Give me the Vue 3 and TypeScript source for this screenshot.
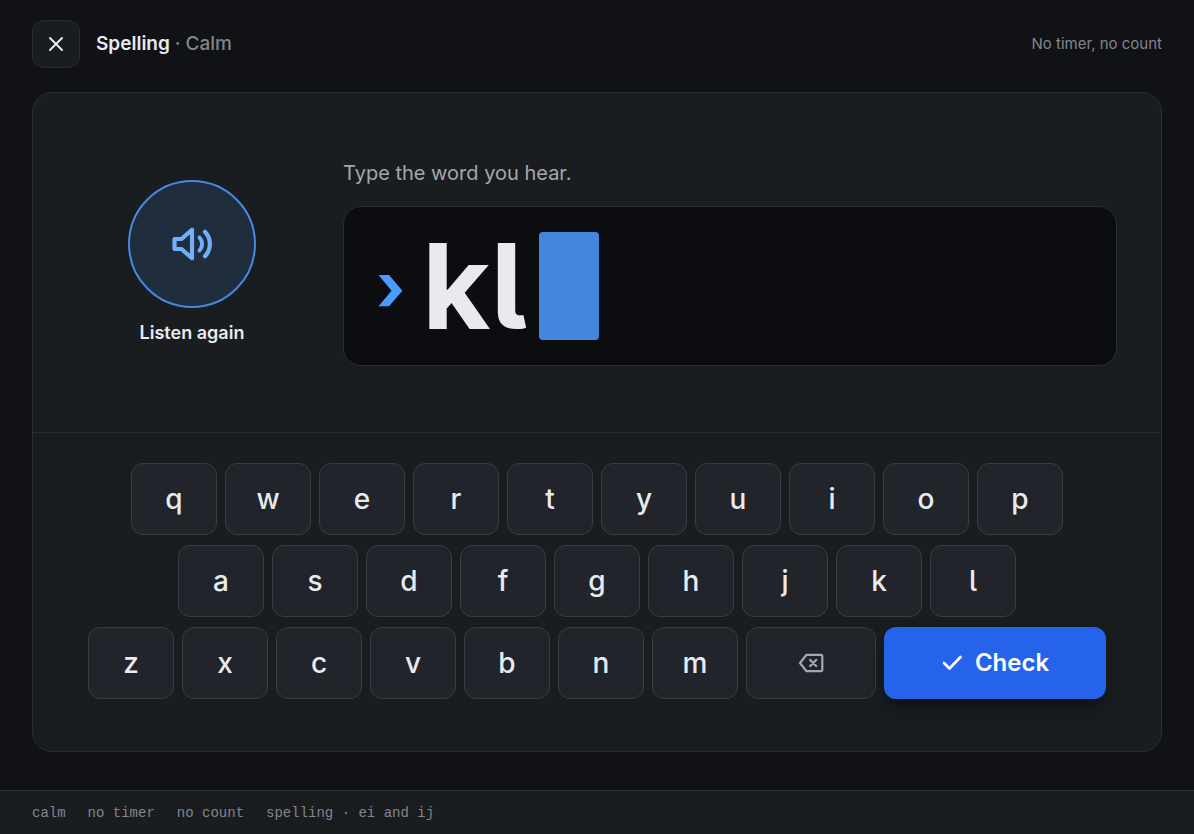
<script setup lang="ts">
import { ref } from 'vue'

const word = ref('kl')
const topRow: string[] = [...'qwertyuiop']
const homeRow: string[] = [...'asdfghjkl']
const bottomRow: string[] = [...'zxcvbnm']
const tags: string[] = ['calm', 'no timer', 'no count', 'spelling · ei and ij']

function press(key: string): void {
  word.value += key
}

function erase(): void {
  word.value = word.value.slice(0, -1)
}
</script>

<template>
  <div class="page">
    <header class="header">
      <button class="close" type="button" aria-label="Close">
        <svg viewBox="0 0 24 24" width="24" height="24" class="icon">
          <path d="M6 6l12 12M18 6L6 18" stroke-width="2" />
        </svg>
      </button>
      <h1 class="title">Spelling <span class="mode">· Calm</span></h1>
      <p class="note">No timer, no count</p>
    </header>

    <main class="card">
      <section class="exercise">
        <div class="listen">
          <button id="listen" class="speaker" type="button" aria-labelledby="listen-label">
            <svg viewBox="0 0 44 44" width="44" height="44" class="icon">
              <path d="M4.500 17h7L22 7.700v28.600L11.500 27h-7z" stroke-width="4.200" />
              <path d="M29.500 15.500a9.500 9.500 0 0 1 0 13" stroke-width="4" />
              <path d="M35 9.700a18 18 0 0 1 0 24.600" stroke-width="4.200" />
            </svg>
          </button>
          <label id="listen-label" for="listen" class="listen-label">Listen again</label>
        </div>
        <div class="answer">
          <label class="prompt" for="word">Type the word you hear.</label>
          <div class="field">
            <span class="chevron" aria-hidden="true">›</span>
            <input id="word" v-model="word" class="word" type="text" size="1" autocomplete="off" spellcheck="false" />
            <span class="caret" aria-hidden="true"></span>
          </div>
        </div>
      </section>

      <section class="keyboard" aria-label="Keyboard">
        <div class="row">
          <button v-for="k in topRow" :key="k" class="key" type="button" @click="press(k)">{{ k }}</button>
        </div>
        <div class="row">
          <button v-for="k in homeRow" :key="k" class="key" type="button" @click="press(k)">{{ k }}</button>
        </div>
        <div class="row">
          <button v-for="k in bottomRow" :key="k" class="key" type="button" @click="press(k)">{{ k }}</button>
          <button class="key erase" type="button" aria-label="Backspace" @click="erase">
            <svg viewBox="0 0 28 28" width="28" height="28" class="icon">
              <path d="M9.500 5.800h14.500a1.300 1.300 0 0 1 1.300 1.300v13.800a1.300 1.300 0 0 1-1.300 1.300H9.500L3 14z" stroke-width="2.200" />
              <path d="M13.200 11l6 6M19.200 11l-6 6" stroke-width="2.400" />
            </svg>
          </button>
          <button class="check" type="button">
            <svg viewBox="0 0 24 24" width="24" height="24" class="icon">
              <path d="M3 13l5.500 5.500L19.500 7" stroke-width="2.600" />
            </svg>
            Check
          </button>
        </div>
      </section>
    </main>

    <footer class="footer">
      <span v-for="t in tags" :key="t">{{ t }}</span>
    </footer>
  </div>
</template>

<style>
body {
  margin: 0;
  background: #111216;
}
</style>

<style scoped>
* {
  box-sizing: border-box;
}

.page {
  min-height: 100vh;
  display: flex;
  flex-direction: column;
  background: #111216;
  color: #e9eaee;
  font-family: Inter, "Liberation Sans", sans-serif;
}

button,
input {
  font: inherit;
  color: inherit;
}

button {
  display: flex;
  align-items: center;
  justify-content: center;
  padding: 0;
  cursor: pointer;
}

.icon {
  fill: none;
  stroke: currentColor;
  stroke-linecap: round;
  stroke-linejoin: round;
}

.header {
  display: flex;
  align-items: center;
  gap: 16px;
  padding: 20px 32px 24px;
}

.close {
  width: 48px;
  height: 48px;
  border: 1px solid #2a2d31;
  border-radius: 12px;
  background: #191d1f;
}

.title {
  margin: 0;
  font-size: 19px;
  font-weight: 600;
  line-height: 24px;
}

.mode {
  color: #82858e;
  font-weight: 500;
}

.note {
  margin: 0 0 0 auto;
  color: #82858e;
  font-size: 15px;
  line-height: 24px;
}

.card {
  flex: 1;
  display: flex;
  flex-direction: column;
  margin: 0 32px 38px;
  border: 1px solid #2a2d31;
  border-radius: 20px;
  background: #191d1f;
}

.exercise {
  flex: 1;
  display: grid;
  grid-template-columns: 230px 1fr;
  align-items: center;
  gap: 36px;
  padding: 24px 44px;
}

.listen {
  display: flex;
  flex-direction: column;
  align-items: center;
  gap: 12px;
}

.speaker {
  width: 128px;
  height: 128px;
  border: 2px solid #4789e2;
  border-radius: 50%;
  background: #1f2d3d;
  color: #74aefa;
}

.listen-label {
  font-size: 18px;
  font-weight: 600;
  line-height: 26px;
}

.answer {
  display: flex;
  flex-direction: column;
  gap: 20px;
}

.prompt {
  color: #a4a7ae;
  font-size: 20px;
  line-height: 26px;
}

.field {
  display: flex;
  align-items: center;
  height: 160px;
  padding: 0 32px;
  border: 1px solid #2a2d31;
  border-radius: 18px;
  background: #0b0d10;
}

.chevron {
  width: 46px;
  color: #4a9aff;
  font-size: 68px;
  font-weight: 700;
  line-height: 72px;
}

.word {
  field-sizing: content;
  min-width: 0;
  height: 144px;
  padding: 0;
  border: 0;
  outline: 0;
  background: transparent;
  font-size: 118px;
  font-weight: 700;
  line-height: 144px;
  font-feature-settings: "cv05";
}

.caret {
  width: 60px;
  height: 108px;
  margin-left: 12px;
  border-radius: 4px;
  background: #4387dc;
}

.keyboard {
  display: flex;
  flex-direction: column;
  gap: 10px;
  padding: 30px 44px 52px;
  border-top: 1px solid #2a2d31;
}

.row {
  display: flex;
  justify-content: center;
  gap: 8px;
}

.key {
  width: 86px;
  height: 72px;
  border: 1px solid #393c41;
  border-radius: 12px;
  background: #21242b;
  font-size: 28px;
  font-weight: 500;
  font-feature-settings: "cv05";
}

.erase {
  width: 130px;
  color: #a4a7ae;
}

.check {
  gap: 10px;
  width: 222px;
  height: 72px;
  padding-bottom: 2px;
  border: 0;
  border-radius: 12px;
  background: #2563eb;
  box-shadow: 0 10px 20px -6px #0b0c0f;
  color: #fff;
  font-size: 24px;
  font-weight: 600;
}

.footer {
  display: flex;
  align-items: center;
  gap: 22px;
  height: 44px;
  padding: 0 32px;
  border-top: 1px solid #2a2d31;
  background: #191d1f;
  color: #82858e;
  font-family: "Liberation Mono", monospace;
  font-size: 14px;
}
</style>
